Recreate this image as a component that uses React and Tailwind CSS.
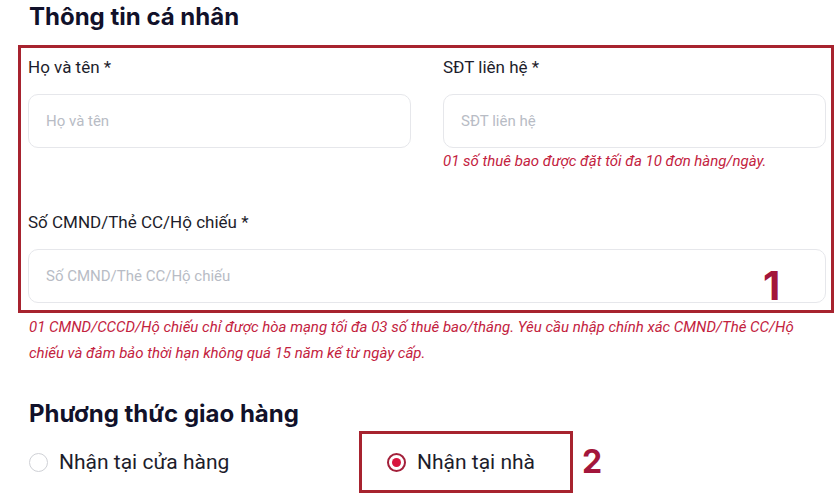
import React from 'react'

function Field({ label, placeholder, note }) {
  return (
    <div>
      <p className="h-5 text-[17px] leading-5 text-[#1d1d2b]">{label}</p>
      <div className="mt-[17px] flex h-[54px] items-center rounded-[10px] border border-[#e6e7eb] bg-white pl-[17px]">
        <span className="text-[15px] text-[#b8bcc5]">{placeholder}</span>
      </div>
      {note && (
        <p className="mt-[4px] text-[15px] italic leading-[18px] text-[#c3223e]">{note}</p>
      )}
    </div>
  )
}

function Radio({ checked, label }) {
  return (
    <div className="flex items-center">
      {checked ? (
        <span className="flex h-[19px] w-[19px] items-center justify-center rounded-full border-2 border-[#a3203a]">
          <span className="h-[9px] w-[9px] rounded-full bg-[#d8163f]"></span>
        </span>
      ) : (
        <span className="h-[19px] w-[19px] rounded-full border border-[#cfd1d6] bg-white"></span>
      )}
      <span className="ml-[11px] text-[21px] leading-6 text-[#1d1d2b]">{label}</span>
    </div>
  )
}

export default function App() {
  return (
    <div
      className="h-[496px] w-[836px] overflow-hidden bg-white"
      style={{ fontFamily: 'Roboto, "Noto Sans", sans-serif' }}
    >
      <div className="pl-[29px] pt-[2px]">
        <h2
          className="text-[24px] font-bold leading-[30px] text-[#11112a]"
          style={{ fontFamily: 'Inter, "Noto Sans", sans-serif' }}
        >
          Thông tin cá nhân
        </h2>
      </div>

      {/* annotation 1 */}
      <div className="relative ml-[18px] mt-[13px] h-[268px] w-[816px] border-[3px] border-[#a7232f] pl-[7px] pr-[5px] pt-[9px]">
        <div className="grid grid-cols-2 gap-x-[32px]">
          <Field label="Họ và tên *" placeholder="Họ và tên" />
          <Field
            label="SĐT liên hệ *"
            placeholder="SĐT liên hệ"
            note="01 số thuê bao được đặt tối đa 10 đơn hàng/ngày."
          />
        </div>
        <div className="mt-[42px]">
          <Field label="Số CMND/Thẻ CC/Hộ chiếu *" placeholder="Số CMND/Thẻ CC/Hộ chiếu" />
        </div>
        <span
          className="absolute left-[742px] top-[216px] text-[40px] font-bold leading-[44px] text-[#a3163b]"
          style={{ fontFamily: 'Inter, sans-serif' }}
        >
          1
        </span>
      </div>

      <p className="ml-[29px] mt-[1px] w-[800px] text-[15px] italic leading-[26px] text-[#c3223e]">
        01 CMND/CCCD/Hộ chiếu chỉ được hòa mạng tối đa 03 số thuê bao/tháng. Yêu cầu nhập chính xác CMND/Thẻ CC/Hộ
        <br />
        chiếu và đảm bảo thời hạn không quá 15 năm kể từ ngày cấp.
      </p>

      <h3
        className="ml-[29px] mt-[34px] text-[24px] font-bold leading-[28px] text-[#11112a]"
        style={{ fontFamily: 'Inter, "Noto Sans", sans-serif' }}
      >
        Phương thức giao hàng
      </h3>

      <div className="mt-[3px] flex items-center pl-[29px]">
        <div className="w-[330px]">
          <Radio label="Nhận tại cửa hàng" />
        </div>
        {/* annotation 2 */}
        <div className="flex h-[62px] w-[214px] items-center border-[3px] border-[#a7232f] pl-[25px]">
          <Radio checked label="Nhận tại nhà" />
        </div>
        <span
          className="ml-[9px] text-[32px] font-bold leading-none text-[#a3163b]"
          style={{ fontFamily: 'Inter, sans-serif' }}
        >
          2
        </span>
      </div>
    </div>
  )
}
